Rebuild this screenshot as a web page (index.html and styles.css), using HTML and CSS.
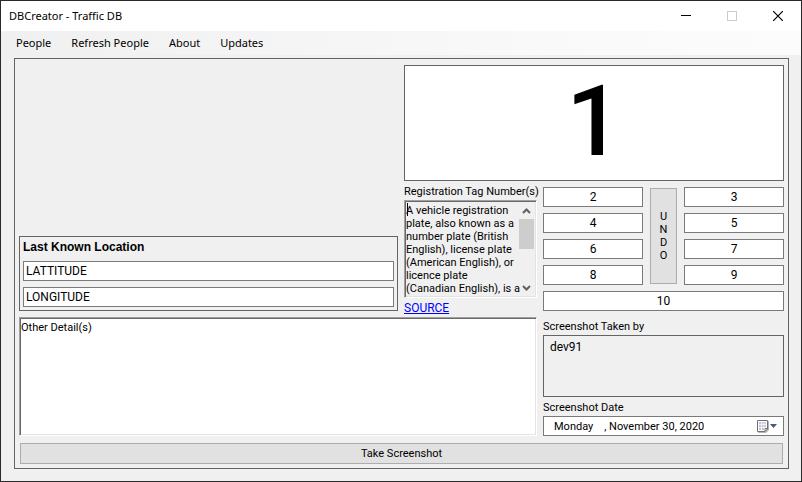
FILE: index.html
```html
<!DOCTYPE html>
<html lang="en">
<head>
<meta charset="utf-8">
<title>DBCreator - Traffic DB</title>
<link rel="stylesheet" href="styles.css">
</head>
<body>
<div class="window">
  <header class="titlebar">
    <h1 class="title">DBCreator - Traffic DB</h1>
    <div class="window-buttons">
      <button class="window-button" type="button" aria-label="Minimize"><svg width="10" height="10" viewBox="0 0 10 10" shape-rendering="crispEdges"><path d="M0 4.500H10" stroke="#000"/></svg></button>
      <button class="window-button" type="button" aria-label="Maximize" disabled><svg width="10" height="10" viewBox="0 0 10 10" shape-rendering="crispEdges"><rect x=".5" y=".5" width="9" height="9" fill="none" stroke="#ccc"/></svg></button>
      <button class="window-button" type="button" aria-label="Close"><svg width="10" height="10" viewBox="0 0 10 10"><path d="M0 0L10 10M10 0L0 10" stroke="#000" stroke-width="1.2"/></svg></button>
    </div>
  </header>
  <nav class="menu">
    <button class="menu-item" type="button">People</button>
    <button class="menu-item" type="button">Refresh People</button>
    <button class="menu-item" type="button">About</button>
    <button class="menu-item" type="button">Updates</button>
  </nav>
  <main class="panel">
    <div class="form">
      <output class="counter">1</output>
      <fieldset class="location">
        <h2 class="location-title">Last Known Location</h2>
        <input class="field" type="text" aria-label="Latitude" value="LATTITUDE">
        <input class="field" type="text" aria-label="Longitude" value="LONGITUDE">
      </fieldset>
      <section class="tags">
        <label class="label" for="tag-info">Registration Tag Number(s)</label>
        <div class="sunken scroll-box">
          <textarea class="tag-info" id="tag-info" readonly>A vehicle registration
plate, also known as a
number plate (British
English), license plate
(American English), or
licence plate
(Canadian English), is a</textarea>
          <span class="caret"></span>
          <div class="scrollbar">
            <svg width="9" height="17" viewBox="0 0 9 17"><path d="M1 11L4.500 7.500L8 11" fill="none" stroke="#606060" stroke-width="2"/></svg>
            <div class="thumb"></div>
            <svg width="9" height="17" viewBox="0 0 9 17"><path d="M1 7L4.500 10.500L8 7" fill="none" stroke="#606060" stroke-width="2"/></svg>
          </div>
        </div>
        <a class="source" href="#source">SOURCE</a>
      </section>
      <textarea class="sunken details" aria-label="Other details">Other Detail(s)</textarea>
      <section class="side">
        <div class="numbers">
          <input class="field number" type="text" aria-label="Tag 2" value="2">
          <button class="button undo" type="button">U<br>N<br>D<br>O</button>
          <input class="field number" type="text" aria-label="Tag 3" value="3">
          <input class="field number" type="text" aria-label="Tag 4" value="4">
          <input class="field number" type="text" aria-label="Tag 5" value="5">
          <input class="field number" type="text" aria-label="Tag 6" value="6">
          <input class="field number" type="text" aria-label="Tag 7" value="7">
          <input class="field number" type="text" aria-label="Tag 8" value="8">
          <input class="field number" type="text" aria-label="Tag 9" value="9">
          <input class="field number wide" type="text" aria-label="Tag 10" value="10">
        </div>
        <label class="label taken-label" for="taken-by">Screenshot Taken by</label>
        <output class="taken-by" id="taken-by">dev91</output>
        <label class="label" for="date">Screenshot Date</label>
        <div class="date">
          <input class="date-text" id="date" type="text" value="Monday    , November 30, 2020">
          <button class="date-button" type="button" aria-label="Open calendar">
            <svg width="22" height="14" viewBox="0 0 22 14"><path d="M2 2H13V11L10 14H2Z" fill="#b9b4b4"/><path d="M1.500 1.500H11.500V10L9 12.500H1.500Z" fill="#fff" stroke="#786e6e"/><path d="M3 3H10V9H8V11H3Z" fill="#bdc9dc"/><path d="M3 5.500H10M3 8.500H10M5.500 3V11M8 3V10" stroke="#fff" stroke-width=".7"/><path d="M9 12V9.500H11.500" fill="none" stroke="#786e6e"/><path d="M14 5H21L17.500 9Z" fill="#415b85"/></svg>
          </button>
        </div>
      </section>
    </div>
    <button class="button capture" type="button">Take Screenshot</button>
  </main>
</div>
</body>
</html>
```
FILE: styles.css
```css
* {
  box-sizing: border-box;
}

body {
  margin: 0;
  background: #f0f0f0;
  color: #000;
  font: 11px/13px Roboto, "Liberation Sans", sans-serif;
}

button,
input,
textarea {
  margin: 0;
  padding: 0;
  border: 0;
  border-radius: 0;
  outline: 0;
  background: none;
  color: inherit;
  font: inherit;
}

.window {
  display: flex;
  flex-direction: column;
  min-height: 100vh;
  border: 1px solid #2b2929;
}

.titlebar {
  display: flex;
  justify-content: space-between;
  height: 30px;
  padding-left: 8px;
  background: #fff;
}

.title {
  margin: 0;
  font: 11px/30px "Noto Sans", "Open Sans", sans-serif;
}

.window-buttons {
  display: flex;
}

.window-button {
  display: flex;
  align-items: center;
  justify-content: center;
  width: 46px;
}

.menu {
  display: flex;
  height: 24px;
  padding-left: 8px;
  background: linear-gradient(90deg, #f0f0f0, #fafafa 75%, #fcfcfc);
  font: 11px/24px "Noto Sans", "Open Sans", sans-serif;
}

.menu-item {
  padding: 0 7px;
  margin-right: 6px;
}

.panel {
  flex: 1;
  display: flex;
  flex-direction: column;
  margin: 3px 12px 12px 13px;
  padding: 6px 4px 4px;
  border: 1px solid #646464;
}

.form {
  flex: 1;
  display: grid;
  grid-template-columns: 1fr 133px 241px;
  grid-template-rows: 116px auto 1fr;
  grid-template-areas:
    ". counter counter"
    "location tags side"
    "details details side";
  column-gap: 6px;
}

.counter {
  grid-area: counter;
  border: 1px solid #646464;
  background: #fff;
  font-weight: 500;
  font-size: 98px;
  line-height: 112px;
  text-align: center;
}

.location {
  grid-area: location;
  align-self: end;
  display: flex;
  flex-direction: column;
  gap: 6px;
  min-width: 0;
  margin: 0 0 6px;
  padding: 3px;
  border: 1px solid #646464;
}

.location-title {
  margin: 0;
  font: bold 12px/15px "Liberation Sans", Arial, sans-serif;
}

.field {
  width: 100%;
  height: 20px;
  padding: 0 2px;
  border: 1px solid #7a7a7a;
  background: #fff;
  font-size: 12px;
}

.tags {
  grid-area: tags;
  display: flex;
  flex-direction: column;
  padding: 4px 0 2px;
}

.label {
  margin-bottom: 2px;
  white-space: nowrap;
}

.sunken {
  border: 1px solid;
  border-color: #a0a0a0 #fff #fff #a0a0a0;
  box-shadow: inset 1px 1px #696969, inset -1px -1px #e3e3e3;
}

.scroll-box {
  position: relative;
  display: flex;
  height: 98px;
  margin-bottom: 4px;
  padding: 1px;
}

.tag-info {
  position: relative;
  z-index: 1;
  flex: 1;
  min-width: 0;
  margin-right: -4px;
  padding-top: 2px;
  overflow: hidden;
  resize: none;
  white-space: pre;
}

.caret {
  position: absolute;
  top: 2px;
  left: 2px;
  width: 1px;
  height: 13px;
  background: #000;
}

.scrollbar {
  display: flex;
  flex-direction: column;
  align-items: center;
  width: 17px;
  background: #f0f0f0;
}

.thumb {
  width: 15px;
  height: 30px;
  margin-bottom: auto;
  background: #cdcdcd;
}

.source {
  align-self: start;
  color: #00f;
  font-size: 12px;
}

.details {
  grid-area: details;
  margin-bottom: 7px;
  padding: 3px 1px;
  background: #fff;
  resize: none;
}

.side {
  grid-area: side;
  display: flex;
  flex-direction: column;
  padding-top: 6px;
}

.numbers {
  display: grid;
  grid-template-columns: 1fr 27px 1fr;
  gap: 6px 7px;
}

.number {
  text-align: center;
}

.wide {
  grid-column: 1 / -1;
}

.button {
  border: 1px solid #adadad;
  background: #e1e1e1;
}

.undo {
  grid-area: 1 / 2 / 5 / 3;
  margin: 1px 0;
}

.taken-label {
  margin-top: 9px;
}

.taken-by {
  height: 62px;
  margin-bottom: 4px;
  padding: 5px 6px;
  border: 1px solid #646464;
  font-size: 12px;
}

.date {
  display: flex;
  align-items: center;
  height: 20px;
  padding: 0 5px 0 10px;
  border: 1px solid #7a7a7a;
  background: #fff;
}

.date-text {
  flex: 1;
  min-width: 0;
}

.date-button {
  display: flex;
}

.capture {
  height: 21px;
  margin: 0 1px;
}
```
